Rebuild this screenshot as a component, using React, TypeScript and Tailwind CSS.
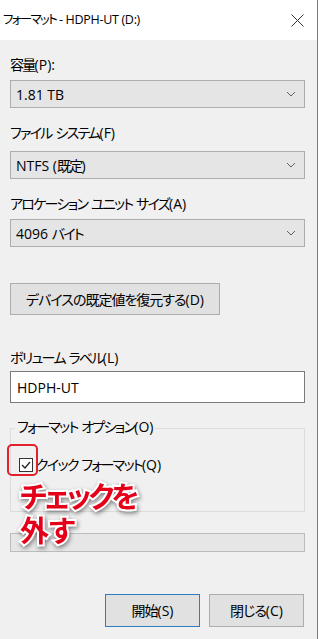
import React from "react";

const base = "font-['Open_Sans','Noto_Sans_CJK_JP',sans-serif] [font-feature-settings:'palt']";
const k = "tracking-[-1.7px]";

// Japanese words get tight tracking, spaces between them stay normal
const J = ({ words }: { words: string[] }) => (
  <>
    {words.map((w, i) => (
      <React.Fragment key={i}>
        {i > 0 && " "}
        <span className={k}>{w}</span>
      </React.Fragment>
    ))}
  </>
);

const Chevron = () => (
  <svg width="10" height="6" viewBox="0 0 10 6" className="text-[#606060]">
    <path d="M1 1l4 4 4-4" fill="none" stroke="currentColor" strokeWidth="1" />
  </svg>
);

const Combo = ({ children }: { children: React.ReactNode }) => (
  <div className="w-[295px] h-[28px] bg-[#e5e5e5] border border-[#adadad] flex items-center justify-between pl-[5px] pr-[8px]">
    <span className="text-[14px] text-[#000]">{children}</span>
    <Chevron />
  </div>
);

const Label = ({ children, mt }: { children: React.ReactNode; mt: string }) => (
  <div className={`h-[20px] leading-[20px] text-[14px] text-[#000] ${mt}`}>{children}</div>
);

const App = () => {
  return (
    <div className={`w-[320px] h-[639px] bg-white flex ${base}`}>
      <div className="relative w-[318px] h-full border-r border-[#7a7a7a] flex flex-col">
        {/* title bar */}
        <div className="h-[40px] bg-white flex items-center justify-between pl-[3px] pr-[13px] shrink-0">
          <span className="text-[12.5px] text-[#000] tracking-[-0.3px]">
            <span className={k}>フォーマット</span> - HDPH-UT (D:)
          </span>
          <svg width="13" height="13" viewBox="0 0 13 13">
            <path d="M0.5 0.5l12 12M12.5 0.5l-12 12" stroke="#333" strokeWidth="1" />
          </svg>
        </div>

        <div className="flex-1 bg-[#f0f0f0] px-[10px] flex flex-col">
          <Label mt="mt-[15px]">
            <J words={["容量"]} />(P):
          </Label>
          <div className="mt-[5px]">
            <Combo>1.81 TB</Combo>
          </div>

          <Label mt="mt-[15px]">
            <J words={["ファイル", "システム"]} />(F)
          </Label>
          <div className="mt-[8px]">
            <Combo>
              NTFS (<J words={["既定"]} />)
            </Combo>
          </div>

          <Label mt="mt-[15px]">
            <J words={["アロケーション", "ユニット", "サイズ"]} />(A)
          </Label>
          <div className="mt-[5px]">
            <Combo>
              4096 <J words={["バイト"]} />
            </Combo>
          </div>

          <button className="mt-[36px] w-[210px] h-[32px] bg-[#e1e1e1] border border-[#adadad] text-[14px] text-[#000] flex items-center justify-center">
            <span className="tracking-[-1px]">デバイスの既定値を復元する</span>(D)
          </button>

          <Label mt="mt-[33px]">
            <J words={["ボリューム", "ラベル"]} />(L)
          </Label>
          <div className="mt-[3px] w-[295px] h-[32px] bg-white border border-[#7a7a7a] flex items-center pl-[6px] text-[14px] text-[#000]">
            HDPH-UT
          </div>

          {/* group box */}
          <div className="relative mt-[25px] w-[295px] h-[84px] border border-[#dcdcdc]">
            <span className="absolute left-[4px] -top-[12px] px-[2px] bg-[#f0f0f0] text-[14px] leading-[20px] text-[#000]">
              <J words={["フォーマット", "オプション"]} />(O)
            </span>
            <div className="flex items-center mt-[26px] ml-[8px] gap-[3px]">
              <div className="w-[14px] h-[14px] bg-white border border-[#333] flex items-center justify-center">
                <svg width="10" height="8" viewBox="0 0 10 8">
                  <path d="M1 4l3 3 5-6" fill="none" stroke="#222" strokeWidth="1.3" />
                </svg>
              </div>
              <span className="text-[14px] leading-[20px] text-[#000]">
                <J words={["クイック", "フォーマット"]} />(Q)
              </span>
            </div>
          </div>

          {/* progress */}
          <div className="mt-[21px] w-[295px] h-[19px] bg-[#e6e6e6] border border-[#bcbcbc]" />

          <div className="mt-[42px] flex justify-end gap-[9px] pr-[3px]">
            <button className="w-[95px] h-[33px] bg-[#e1e1e1] border border-[#2f7bc4] text-[14px] text-[#000]">
              <span className="tracking-[-1px]">開始</span>(S)
            </button>
            <button className="w-[95px] h-[33px] bg-[#e1e1e1] border border-[#adadad] text-[14px] text-[#000]">
              <span className="tracking-[-1px]">閉じる</span>(C)
            </button>
          </div>
        </div>

        {/* annotation overlay */}
        <div className="absolute left-[7px] top-[444px] w-[31px] h-[32px] border-2 border-[#e0202a] rounded-[5px]" />
        <div className="absolute left-[20px] top-[478px] font-['Noto_Sans_CJK_JP',sans-serif] font-bold text-[29px] leading-[34px] text-[#e5001a] [paint-order:stroke_fill] [-webkit-text-stroke:4px_white] drop-shadow-[1px_2px_2px_rgba(0,0,0,0.45)]">
          <div className="tracking-[-3px]">チェックを</div>
          <div>外す</div>
        </div>
      </div>
    </div>
  );
};

export default App;
